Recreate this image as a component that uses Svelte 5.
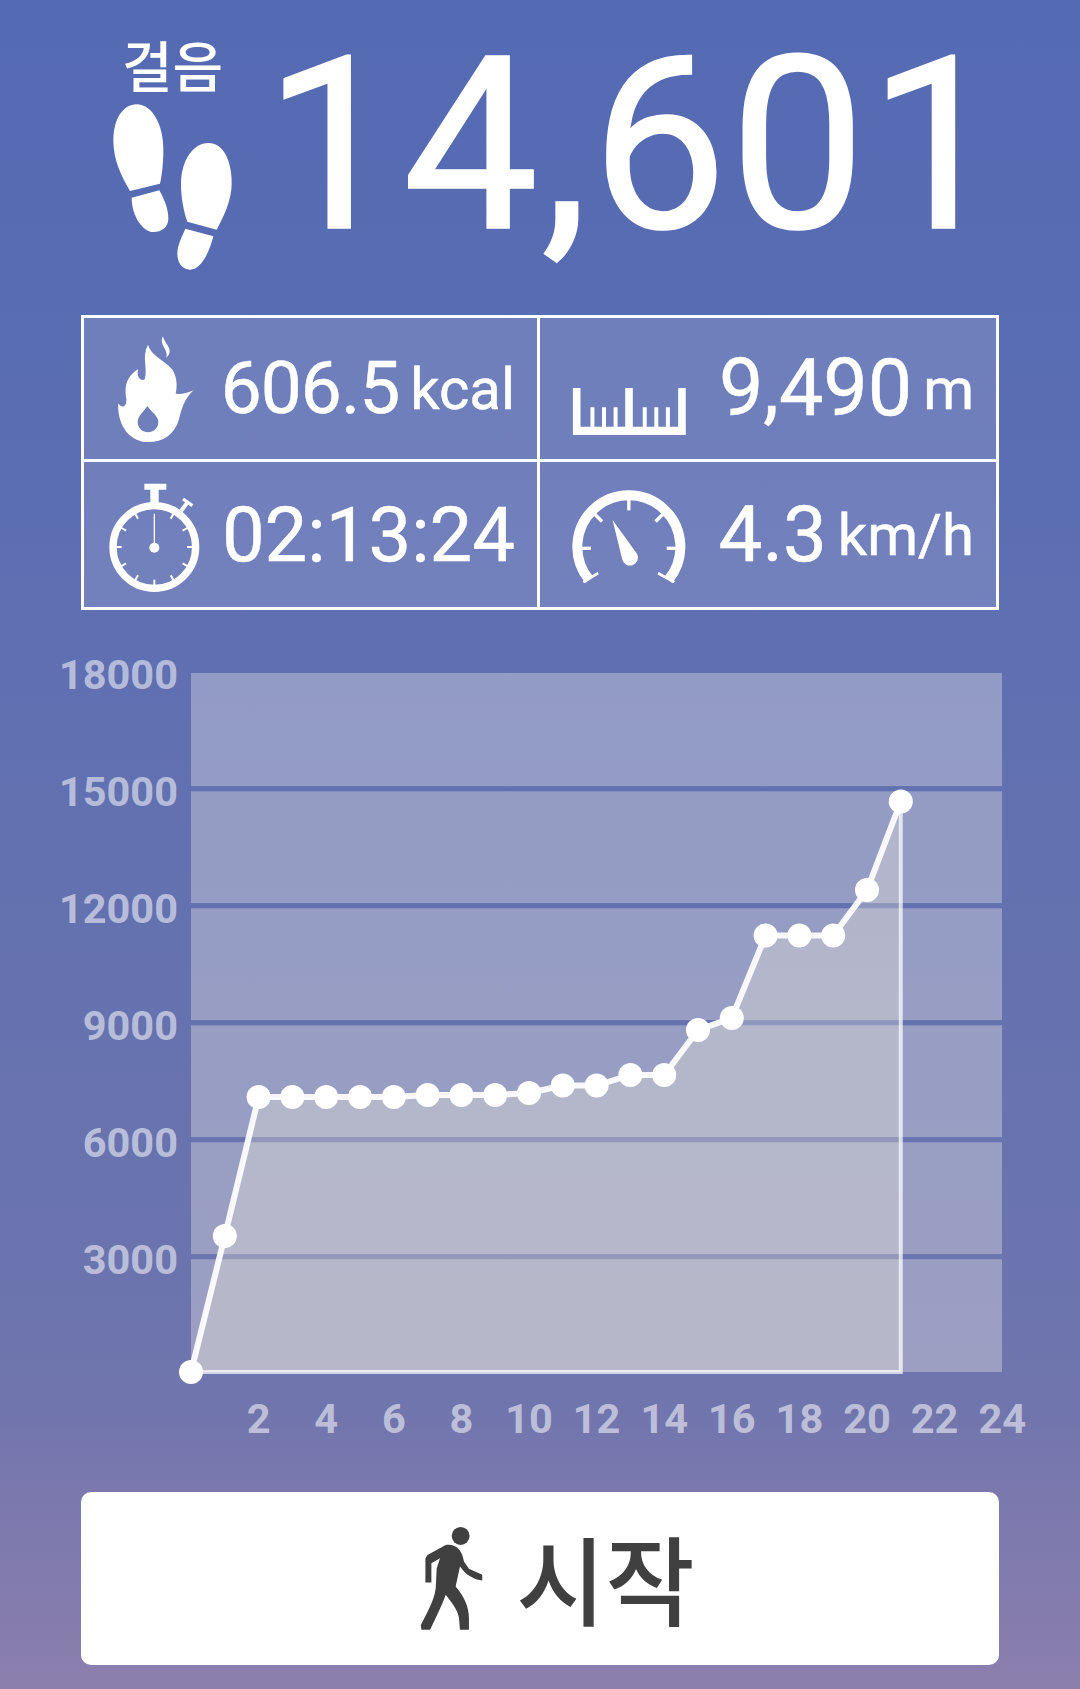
<script lang="ts">
	// hourly cumulative points, in page pixels on the y axis
	const ys = [1372, 1236, 1097, 1097, 1097, 1097, 1097, 1095, 1095, 1095, 1093, 1085.5, 1085.5, 1075, 1075, 1030, 1018, 935.5, 935.5, 935.5, 890, 801.5];
	const hour_x = (h: number) => 191 + h * 33.8;
	const points = ys.map((y, h) => [hour_x(h), y]);
	const line = points.map((p) => p.join(',')).join(' ');
	const area = line + ' ' + hour_x(21) + ',1372';

	const grid_y = [671.7, 788.7, 905.7, 1022.7, 1139.7, 1256.7];
	const y_labels = [18000, 15000, 12000, 9000, 6000, 3000];
	const x_labels = [2, 4, 6, 8, 10, 12, 14, 16, 18, 20, 22, 24];
	const bands = grid_y.map((y, i) => {
		const top = i === 0 ? 673 : y + 2.6;
		const bottom = i === 5 ? 1372 : grid_y[i + 1] - 2.6;
		return [top, bottom - top];
	});

	const watch_ticks = [30, 60, 90, 120, 150, 180, 210, 240, 270, 300, 330];
	const gauge_ticks = [-90, -45, 0, 45, 90];
</script>

<div class="page">
	<header class="top">
		<div class="steps_side">
			<span class="steps_label">걸음</span>
			<svg class="feet" viewBox="90 245 375 510" width="125" height="170" fill="#fff">
				<path d="M170 252C215 252 250 310 250 390C250 430 245 470 240 490L150 512C125 470 100 420 100 360C100 295 130 252 170 252Z"/>
				<path d="M155 532L238 510C255 540 265 570 265 595C265 620 245 635 220 635C190 635 155 590 155 532Z"/>
				<path d="M385 368C430 368 455 420 455 490C455 540 430 590 410 628L322 604C310 570 303 530 303 490C303 420 340 368 385 368Z"/>
				<path d="M316 625L400 648C390 690 365 748 330 748C305 748 292 725 292 700C292 675 305 650 316 625Z"/>
			</svg>
		</div>
		<div class="steps_count">14,601</div>
	</header>

	<section class="stats">
		<div class="cell">
			<svg class="icon flame" viewBox="130 100 255 340" width="85" height="113" fill="#fff" fill-rule="evenodd">
				<path d="M235 428C185 428 143 385 145 312C158 328 170 322 170 300C165 265 165 235 205 208C200 232 212 245 225 240C235 205 215 170 235 135C245 170 290 185 308 210C325 235 322 270 318 283C335 285 355 280 372 272C345 295 335 330 328 360C315 405 280 428 235 428ZM233 320C222 337 204 350 204 368C204 387 219 399 235 399C251 399 266 387 266 368C266 350 244 337 233 320Z"/>
				<path d="M280 110C266 135 298 150 290 175C316 150 285 135 280 110Z"/>
			</svg>
			<span class="value small">606.5</span><span class="unit">kcal</span>
		</div>
		<div class="cell">
			<svg class="icon ruler" viewBox="125 265 343 142" width="114" height="47" fill="#fff">
				<path d="M127 265H150V382H180V323H192V382H215V323H227V382H250V323H262V382H285V265H308V382H338V323H350V382H373V323H385V382H408V323H420V382H445V265H468V407H127Z"/>
			</svg>
			<span class="value large">9,490</span><span class="unit">m</span>
		</div>
		<div class="cell">
			<svg class="icon watch" viewBox="110 545 285 330" width="95" height="110">
				<circle cx="252" cy="740" r="124" fill="none" stroke="#fff" stroke-width="22"/>
				<path d="M222 550H288V568H265V612H240V568H222Z" fill="#fff"/>
				<line x1="332" y1="632" x2="352" y2="606" stroke="#fff" stroke-width="12"/>
				<line x1="338" y1="596" x2="366" y2="616" stroke="#fff" stroke-width="10"/>
				{#each watch_ticks as a}
					<line x1="252" y1="620" x2="252" y2="642" stroke="#fff" stroke-width="6" transform="rotate({a} 252 740)"/>
				{/each}
				<line x1="252" y1="640" x2="252" y2="740" stroke="#fff" stroke-width="4"/>
				<circle cx="252" cy="742" r="15" fill="#fff"/>
			</svg>
			<span class="value mid">02:13:24</span>
		</div>
		<div class="cell">
			<svg class="icon gauge" viewBox="120 565 355 285" width="118" height="95" fill="#fff">
				<path d="M178 835A155 155 0 1 1 416 835" fill="none" stroke="#fff" stroke-width="30"/>
				<line x1="160" y1="842" x2="205" y2="815" stroke="#fff" stroke-width="8"/>
				<line x1="434" y1="842" x2="385" y2="815" stroke="#fff" stroke-width="8"/>
				{#each gauge_ticks as a}
					<line x1="297" y1="590" x2="297" y2="626" stroke="#fff" stroke-width="10" transform="rotate({a} 297 740)"/>
				{/each}
				<path d="M248 655L322 757A24 24 0 1 1 277 772Z"/>
			</svg>
			<span class="value wide">4.3</span><span class="unit">km/h</span>
		</div>
	</section>

	<svg class="chart" viewBox="0 610 1080 882" width="1080" height="882">
		{#each bands as [top, height]}
			<rect x="191" y={top} width="811" {height} fill="#fffaf0" fill-opacity="0.32"/>
		{/each}
		<polygon points={area} fill="#fff8e0" fill-opacity="0.28"/>
		<polyline points="191,1372 {hour_x(21)},1372 {hour_x(21)},801" fill="none" stroke="#fff" stroke-opacity="0.7" stroke-width="4"/>
		<polyline points={line} fill="none" stroke="#fff" stroke-opacity="0.92" stroke-width="6"/>
		{#each points as [x, y]}
			<circle cx={x} cy={y} r="12" fill="#fff"/>
		{/each}
		{#each y_labels as label, i}
			<text class="axis" x="178" y={grid_y[i] + 17.5} text-anchor="end">{label}</text>
		{/each}
		{#each x_labels as label}
			<text class="axis" x={hour_x(label)} y="1433" text-anchor="middle">{label}</text>
		{/each}
	</svg>

	<button class="start_btn">
		<svg class="walker" viewBox="55 40 195 325" width="65" height="108" fill="#404040">
			<circle cx="180" cy="73" r="27"/>
			<path d="M80 130L135 100C165 95 185 115 190 150L205 172L245 190V207C225 205 205 195 190 180L178 165L165 225C190 255 205 285 205 320V355H178L175 320C172 295 150 270 135 250C125 280 105 320 88 355H62L60 342C75 310 100 270 105 230L108 170L118 140L92 155V213H74V140Z"/>
		</svg>
		<span class="start_text">시작</span>
	</button>
</div>

<style>
	:global(body) {
		margin: 0;
	}

	.page {
		width: 1080px;
		height: 1689px;
		box-sizing: border-box;
		padding-bottom: 24px;
		background: linear-gradient(180deg, #546ab3 0%, #5a6db3 25%, #6371b0 50%, #6b74ae 75%, #7075ad 83%, #7a78ae 88%, #8b7fad 100%);
		font-family: Roboto, "Noto Sans CJK KR", sans-serif;
		color: #fff;
		overflow: hidden;
	}

	.top {
		height: 315px;
		display: flex;
		padding-left: 110px;
		box-sizing: border-box;
	}

	.steps_side {
		width: 125px;
		display: flex;
		flex-direction: column;
		align-items: center;
		padding-top: 27px;
	}

	.steps_label {
		font-family: "Noto Sans CJK KR", sans-serif;
		font-size: 55px;
		font-weight: 500;
		line-height: 72px;
		height: 75px;
	}

	.feet {
		display: block;
	}

	.steps_count {
		margin-left: 29px;
		margin-top: 24px;
		font-size: 242px;
		line-height: 1;
		letter-spacing: 2.5px;
		-webkit-text-stroke: 1.5px #fff;
		white-space: nowrap;
	}

	.stats {
		margin-left: 81px;
		width: 915px;
		display: grid;
		grid-template-columns: 456px 459px;
		grid-template-rows: 144px 151px;
		background: rgba(255, 255, 255, 0.13);
		border-left: 3px solid #fff;
	}

	.cell {
		position: relative;
		display: flex;
		align-items: center;
		justify-content: flex-end;
		padding-right: 22px;
		box-sizing: border-box;
		border-right: 3px solid #fff;
		border-top: 3px solid #fff;
		line-height: 1;
		-webkit-text-stroke: 0.5px #fff;
	}

	.cell:nth-child(n + 3) {
		border-bottom: 3px solid #fff;
	}

	.icon {
		position: absolute;
		display: block;
	}

	.flame {
		left: 29px;
		top: 15px;
	}

	.ruler {
		left: 32px;
		top: 70px;
	}

	.watch {
		left: 23px;
		top: 20px;
	}

	.gauge {
		left: 30px;
		top: 28px;
	}

	.value.small {
		font-size: 73px;
		letter-spacing: -1px;
	}

	.value.mid {
		font-size: 76px;
	}

	.value.wide {
		font-size: 78px;
	}

	.value.large {
		font-size: 79px;
	}

	.unit {
		font-size: 58px;
		margin-left: 11px;
	}

	.chart {
		display: block;
	}

	.axis {
		font-family: Roboto, sans-serif;
		font-weight: 700;
		font-size: 41.5px;
		fill: #fff;
		fill-opacity: 0.55;
	}

	.start_btn {
		display: flex;
		align-items: center;
		justify-content: center;
		gap: 32px;
		margin-left: 81px;
		width: 918px;
		height: 173px;
		padding: 0 0 0 34px;
		box-sizing: border-box;
		background: #fff;
		border: none;
		border-radius: 10px;
		color: #404040;
		font-family: "Noto Sans CJK KR", sans-serif;
		font-size: 97px;
		font-weight: 500;
	}

	.start_text {
		margin-bottom: 6px;
	}

	.walker {
		display: block;
	}
</style>
